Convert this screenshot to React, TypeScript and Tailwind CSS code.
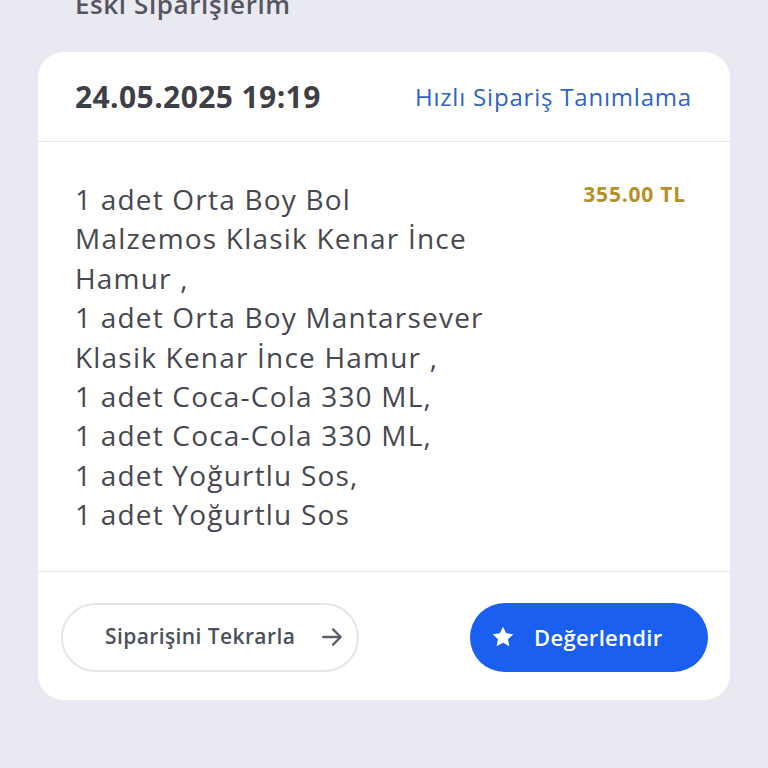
import React from "react";

const lines = [
    "1 adet Orta Boy Bol",
    "Malzemos Klasik Kenar İnce",
    "Hamur ,",
    "1 adet Orta Boy Mantarsever",
    "Klasik Kenar İnce Hamur ,",
    "1 adet Coca-Cola 330 ML,",
    "1 adet Coca-Cola 330 ML,",
    "1 adet Yoğurtlu Sos,",
    "1 adet Yoğurtlu Sos",
];

const App: React.FC = () => {
    return (
        <div
            className="w-[768px] h-[768px] overflow-hidden bg-[#e9e9f1]"
            style={{ fontFamily: "'Open Sans', sans-serif" }}
        >
            <div className="mt-[-12px] pl-[75px] text-[26px] font-semibold text-[#55565e] leading-[32px] tracking-[0.6px]">
                Eski Siparişlerim
            </div>

            <div className="mx-[38px] mt-[32px] bg-white rounded-[26px] overflow-hidden">
                <div className="flex items-center justify-between h-[90px] pl-[37px] pr-[38px] border-b border-[#e6e6ec]">
                    <span className="text-[30px] font-bold text-[#3e3f47] tracking-[0.4px]">24.05.2025 19:19</span>
                    <span className="text-[24px] text-[#2f63c6] tracking-[0.8px]">Hızlı Sipariş Tanımlama</span>
                </div>

                <div className="flex justify-between pl-[37px] pr-[44px] pt-[38px] pb-[36px] border-b border-[#e6e6ec]">
                    <div className="text-[28px] leading-[39.4px] text-[#47484f] whitespace-nowrap tracking-[1.2px]">
                        {lines.map((l, i) => (
                            <div key={i}>{l}</div>
                        ))}
                    </div>
                    <div className="text-[21px] font-bold text-[#b68f2c] leading-[24px] mt-[2px] tracking-[0.8px]">
                        355.00 TL
                    </div>
                </div>

                <div className="flex items-center justify-between pl-[23px] pr-[22px] pt-[31px] pb-[28px]">
                    <button className="flex items-center gap-[24px] h-[69px] w-[298px] pl-[42px] rounded-full border-2 border-[#e4e4ea] bg-white">
                        <span className="text-[21px] font-semibold text-[#4b505c] tracking-[0.4px]">Siparişini Tekrarla</span>
                        <svg width="26" height="26" viewBox="0 0 24 24" fill="none" stroke="#5a5e69" strokeWidth="2.2" strokeLinecap="round" strokeLinejoin="round">
                            <path d="M4 12h15" />
                            <path d="M13 5l7 7-7 7" />
                        </svg>
                    </button>
                    <button className="flex items-center gap-[18px] h-[69px] w-[238px] pl-[20px] rounded-full bg-[#1a5ff0]">
                        <svg width="26" height="26" viewBox="0 0 24 24" fill="#ffffff">
                            <path d="M12 2.5l2.9 6.1 6.6.8-4.9 4.6 1.3 6.6L12 17.3l-5.9 3.3 1.3-6.6L2.5 9.4l6.6-.8z" strokeLinejoin="round" />
                        </svg>
                        <span className="text-[22px] font-semibold text-white tracking-[0.3px]">Değerlendir</span>
                    </button>
                </div>
            </div>
        </div>
    );
};

export default App;
